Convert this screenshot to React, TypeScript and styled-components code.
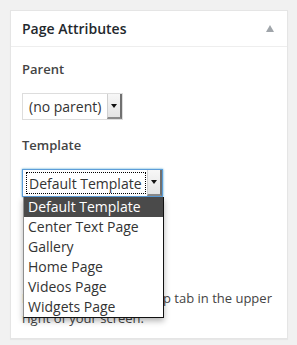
import styled, { createGlobalStyle } from 'styled-components';

const GlobalStyle = createGlobalStyle`
  html, body {
    margin: 0;
    padding: 0;
    background: #f1f1f1;
  }
  body {
    font-family: "Open Sans", "Liberation Sans", sans-serif;
    color: #444;
  }
`;

const Page = styled.div`
  padding: 10px;
`;

const Panel = styled.div`
  box-sizing: border-box;
  width: 278px;
  height: 329px;
  background: #fff;
  border: 1px solid #e5e5e5;
  box-shadow: 0 1px 1px rgba(0, 0, 0, 0.04);
`;

const Header = styled.div`
  display: flex;
  align-items: center;
  justify-content: space-between;
  height: 35px;
  padding: 0 13px 0 11px;
  border-bottom: 1px solid #eee;
`;

const Title = styled.h2`
  margin: 0;
  font-size: 14px;
  font-weight: 600;
  color: #23282d;
  line-height: 1;
`;

const Toggle = styled.svg`
  display: block;
  width: 8px;
  height: 7px;
  fill: #a0a5aa;
`;

const Body = styled.div`
  padding: 13px 11px 0 11px;
`;

const Label = styled.p`
  margin: 0 0 15px 0;
  font-size: 13px;
  font-weight: 600;
  line-height: 18px;
  color: #444;
`;

const Field = styled.div`
  position: relative;
  margin-bottom: 16px;
`;

const SelectBox = styled.div<{ $focused?: boolean; $width: number }>`
  box-sizing: border-box;
  display: flex;
  align-items: stretch;
  width: ${(p) => p.$width}px;
  height: ${(p) => (p.$focused ? 28 : 27)}px;
  border: 1px solid ${(p) => (p.$focused ? '#5b9dd9' : '#ddd')};
  box-shadow: ${(p) => (p.$focused ? '0 0 2px rgba(30, 140, 190, 0.8)' : 'none')};
  background: #fff;
`;

const SelectValue = styled.div<{ $focused?: boolean }>`
  flex: 1;
  display: flex;
  align-items: center;
  margin: 2px 1px 2px 3px;
  padding-left: 2px;
  font-size: 14px;
  color: #333;
  white-space: nowrap;
  border: 1px dotted ${(p) => (p.$focused ? '#000' : 'transparent')};
`;

const ArrowButton = styled.div`
  box-sizing: border-box;
  width: 15px;
  display: flex;
  align-items: center;
  justify-content: center;
  background: linear-gradient(#f7f7f7, #e4e4e4);
  border-left: 1px solid #d0d0d0;
  border-right: 2px solid #707070;
  border-bottom: 2px solid #8a8a8a;
`;

const ArrowIcon = styled.svg`
  display: block;
  width: 6px;
  height: 4px;
  fill: #111;
`;

const Dropdown = styled.ul`
  position: absolute;
  top: 28px;
  left: 1px;
  z-index: 10;
  box-sizing: border-box;
  width: 141px;
  margin: 0;
  padding: 0;
  list-style: none;
  background: #fff;
  border: 1px solid #111;
  border-left-color: #8f8f8f;
  border-top: none;
  box-shadow: 0 3px 6px rgba(0, 0, 0, 0.3);
`;

const Option = styled.li<{ $active?: boolean }>`
  height: 20px;
  line-height: 20px;
  padding-left: 4px;
  font-size: 14px;
  white-space: nowrap;
  color: ${(p) => (p.$active ? '#fff' : '#333')};
  background: ${(p) => (p.$active ? '#4a4a4a' : 'transparent')};
`;

const Help = styled.p`
  margin: 91px 0 0 0;
  font-size: 13px;
  line-height: 20px;
  color: #444;
`;

const templates = [
  'Default Template',
  'Center Text Page',
  'Gallery',
  'Home Page',
  'Videos Page',
  'Widgets Page',
];

const Arrow = () => (
  <ArrowIcon viewBox="0 0 6 4">
    <path d="M0 0h6L3 4z" />
  </ArrowIcon>
);

const App = () => {
  return (
    <>
      <GlobalStyle />
      <Page>
        <Panel>
          <Header>
            <Title>Page Attributes</Title>
            <Toggle viewBox="0 0 8 7">
              <path d="M4 0l4 7H0z" />
            </Toggle>
          </Header>
          <Body>
            <Label>Parent</Label>
            <Field>
              <SelectBox $width={101}>
                <SelectValue>(no parent)</SelectValue>
                <ArrowButton>
                  <Arrow />
                </ArrowButton>
              </SelectBox>
            </Field>
            <Label>Template</Label>
            <Field>
              <SelectBox $focused $width={141}>
                <SelectValue $focused>Default Template</SelectValue>
                <ArrowButton>
                  <Arrow />
                </ArrowButton>
              </SelectBox>
              <Dropdown>
                {templates.map((t, i) => (
                  <Option key={t} $active={i === 0}>
                    {t}
                  </Option>
                ))}
              </Dropdown>
            </Field>
            <Help>Need help? Use the Help tab in the upper right of your screen.</Help>
          </Body>
        </Panel>
      </Page>
    </>
  );
};

export default App;
